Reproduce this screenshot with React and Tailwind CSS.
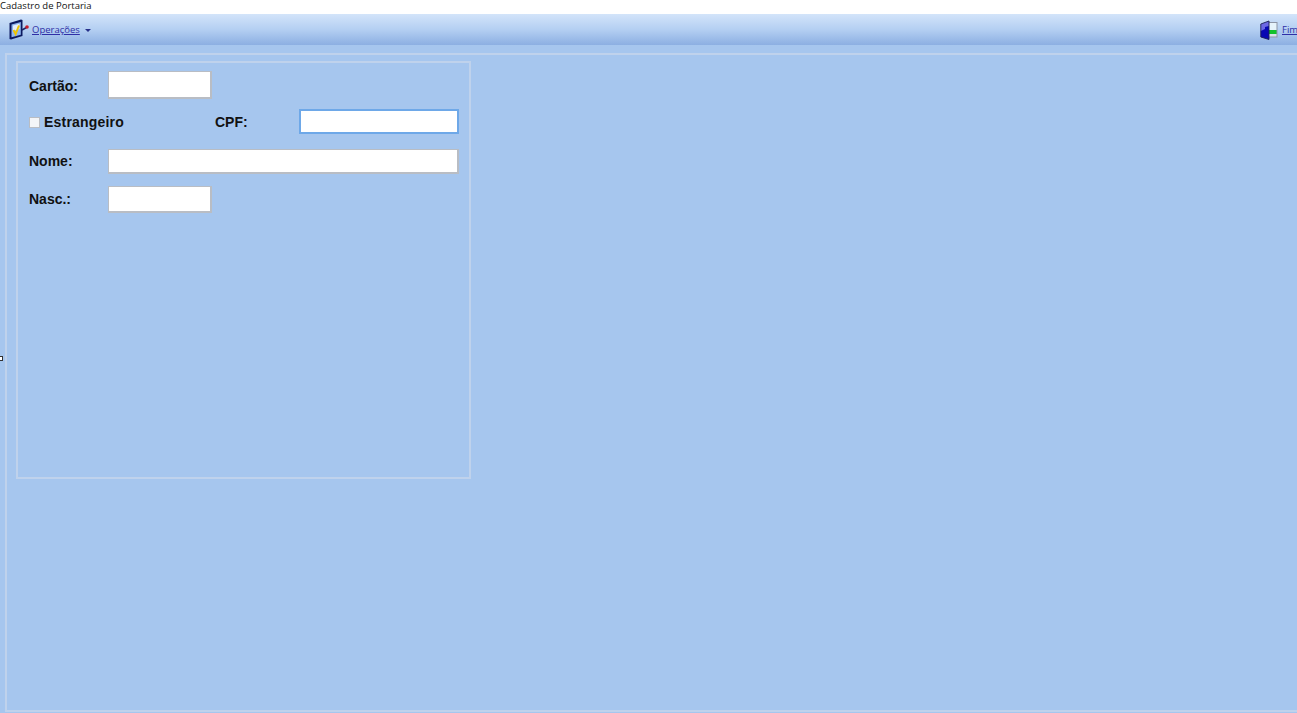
import React from 'react';

function CheckIcon() {
  return (
    <svg width="21" height="21" viewBox="0 0 21 21" className="shrink-0">
      <path d="M1.5 4 L13 0.5 L14.5 1 L14.5 17 L3 20.5 L1.5 20 Z" fill="#0c1a60" />
      <path d="M3.5 5.5 L12.8 3 L12.8 15.8 L3.5 18.2 Z" fill="#8fb4ee" />
      <path d="M5 6.5 L11.5 4.8 L11.5 10 L5 12 Z" fill="#e4eefc" />
      <path d="M5.5 11 L7.6 15 L11 6.5" fill="none" stroke="#efc400" strokeWidth="2" />
      <path d="M14 11 L18.5 8.5" stroke="#1c2468" strokeWidth="1.6" />
      <circle cx="19" cy="8" r="1.8" fill="#c81e2c" />
    </svg>
  );
}

function DoorIcon() {
  return (
    <svg width="18" height="20" viewBox="0 0 18 20" className="shrink-0">
      <rect x="8" y="2" width="9.5" height="15.5" fill="#8d95a6" />
      <rect x="9" y="3" width="7.5" height="7" fill="#e6f3fb" />
      <rect x="9" y="10" width="7.5" height="4" fill="#12c22c" />
      <rect x="9" y="14" width="7.5" height="2.5" fill="#d9e2ec" />
      <path d="M0.8 4 L9 1 L9 19.5 L0.8 17 Z" fill="#6c68e4" />
      <path d="M0.8 11 L5 9 L5 7 L9 6 L9 19.5 L0.8 17 Z" fill="#0808b4" />
      <path d="M0.8 4 L9 1 L9 19.5 L0.8 17 Z" fill="none" stroke="#1c2058" strokeWidth="0.9" />
    </svg>
  );
}

function Field({ className }) {
  return <input className={`bg-white border border-[#b9bdc4] border-r-2 border-b-2 outline-none ${className}`} />;
}

export default function App() {
  return (
    <div className="relative h-[713px] w-[1297px] overflow-hidden flex flex-col bg-[#a6c6ee] font-['Liberation_Sans',Arial,sans-serif]">
      {/* title */}
      <div className="h-[14px] bg-white text-[9.5px] leading-[11px] text-[#111] font-['Open_Sans',sans-serif] shrink-0">
        Cadastro de Portaria
      </div>

      {/* toolbar */}
      <div className="h-[31px] shrink-0 flex items-center justify-between pl-[8px] bg-gradient-to-b from-[#d3e4fa] via-[#b4cff2] to-[#8cafe2] font-['Open_Sans',sans-serif] text-[9.5px]">
        <div className="flex items-center">
          <CheckIcon />
          <span className="ml-[3px] mt-[2px] text-[#2f2fa6] underline">Operações</span>
          <span className="ml-[5px] mt-[1px] border-x-[3px] border-t-[3px] border-x-transparent border-t-[#26308a]" />
        </div>
        <div className="flex items-center w-[37px] shrink-0 overflow-hidden">
          <DoorIcon />
          <span className="ml-[4px] mt-[2px] text-[#2f2fa6] underline">Fim</span>
        </div>
      </div>

      {/* outer panel */}
      <div className="flex-1 mt-[8px] mb-[1px] ml-[5px] border-l-2 border-t-2 border-b-2 border-[#bfd2ec] pl-[9px] pt-[6px]">
        {/* group box */}
        <div className="w-[455px] h-[418px] border-2 border-[#bfd2ec] pl-[11px] pr-[10px] pt-[8px]">
          <div className="flex items-center h-[28px]">
            <span className="w-[79px] mt-[2px] text-[14px] font-bold text-[#111]">Cartão:</span>
            <Field className="w-[104px] h-[28px]" />
          </div>

          <div className="flex items-center h-[25px] mt-[10px]">
            <span className="w-[11px] h-[11px] mt-[2px] bg-[#f3f5f8] border border-[#b9bdc4] shrink-0" />
            <span className="ml-[4px] w-[171px] mt-[2px] text-[14px] font-bold tracking-[0.2px] text-[#111]">Estrangeiro</span>
            <span className="w-[84px] mt-[2px] text-[14px] font-bold text-[#111]">CPF:</span>
            <input className="w-[160px] h-[25px] bg-white border-2 border-[#6ea8e8] outline-none" />
          </div>

          <div className="flex items-center h-[25px] mt-[15px]">
            <span className="w-[79px] text-[14px] font-bold text-[#111]">Nome:</span>
            <Field className="w-[351px] h-[25px]" />
          </div>

          <div className="flex items-center h-[27px] mt-[12px]">
            <span className="w-[79px] text-[14px] font-bold text-[#111]">Nasc.:</span>
            <Field className="w-[104px] h-[27px]" />
          </div>
        </div>
      </div>

      {/* splitter handle */}
      <div className="absolute left-0 top-[356px] w-[3px] h-[5px] bg-white border border-l-0 border-[#333]" />
    </div>
  );
}
